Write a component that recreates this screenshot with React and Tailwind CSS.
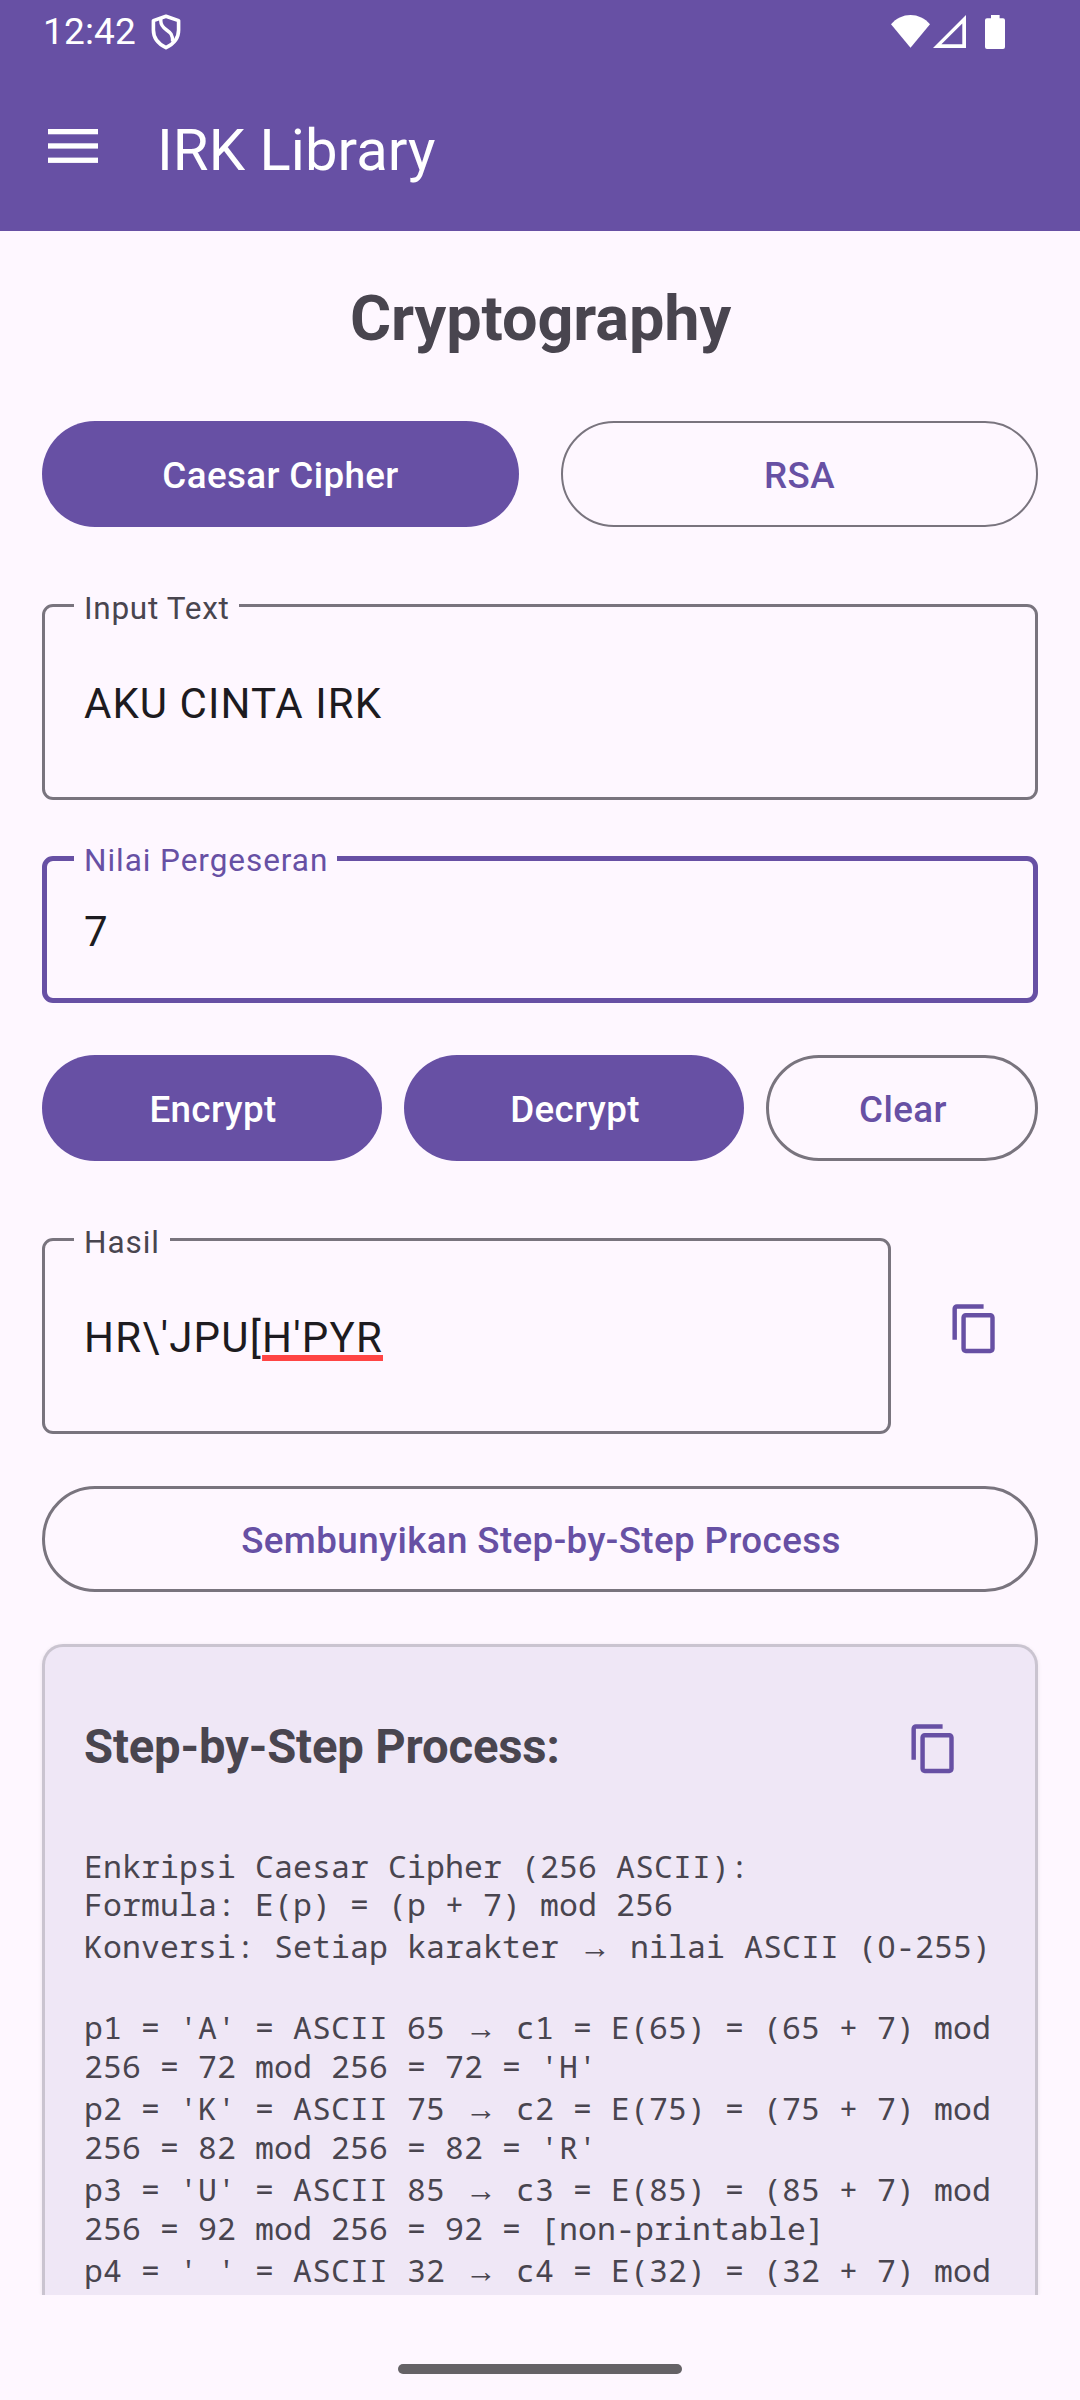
const COPY_PATH =
  "M16 1H4c-1.1 0-2 .9-2 2v14h2V3h12V1zm3 4H8c-1.1 0-2 .9-2 2v14c0 1.1.9 2 2 2h11c1.1 0 2-.9 2-2V7c0-1.1-.9-2-2-2zm0 16H8V7h11v14z";

function CopyIcon({ className }) {
  return (
    <svg viewBox="0 0 24 24" className={`h-[53.4px] w-[53.4px] shrink-0 fill-[#6750A4] ${className}`}>
      <path d={COPY_PATH} />
    </svg>
  );
}

function StatusBar() {
  return (
    <div className="flex h-[63px] items-center pr-[75px] pl-[43px]">
      <span className="w-[93px] text-[37px] leading-[44px] tracking-[0.15px] text-white">12:42</span>
      <svg viewBox="0 0 30 36" className="ml-[14.5px] h-[36px] w-[30px] fill-none stroke-white stroke-[3.6]">
        <path d="M15 2.2 27.6 6.6V16c0 7.6-4.6 13.8-12.6 17.6C7 29.8 2.4 23.6 2.4 16V6.6Z" strokeLinejoin="round" />
        <path d="M9.8 4.5V7c0 4.6 2.4 6.6 5.8 9 4 2.8 6 4.6 6 11.5" strokeWidth="3.4" />
      </svg>
      <svg viewBox="0 0 39 33" className="ml-auto h-[33px] w-[39px] fill-white">
        <path d="M19.5 32.8 0 9.2C5 3.4 12 0 19.5 0S34 3.4 39 9.2Z" />
      </svg>
      <svg viewBox="0 0 33 33" className="ml-[3px] h-[33px] w-[33px] fill-white">
        <path fillRule="evenodd" d="M33 0V33H0ZM29.3 8.4 8.4 29.3H29.3Z" />
      </svg>
      <svg viewBox="0 0 20 34" className="ml-[19px] h-[34px] w-[20px] fill-white">
        <path d="M6 0h8.6v3.3H18a2 2 0 0 1 2 2V32a2 2 0 0 1-2 2H2a2 2 0 0 1-2-2V5.3a2 2 0 0 1 2-2h4Z" />
      </svg>
    </div>
  );
}

function AppBar() {
  return (
    <div className="flex h-[168px] items-center pl-[48px]">
      <svg viewBox="0 0 50 34" className="mb-[2px] h-[34px] w-[50px] fill-white">
        <rect width="50" height="5.3" />
        <rect y="14.3" width="50" height="5.3" />
        <rect y="28.6" width="50" height="5.3" />
      </svg>
      <span className="ml-[59px] pt-[6px] text-[58px] leading-[70px] tracking-[0.06px] text-white">IRK Library</span>
    </div>
  );
}

function FilledButton({ children, className = "" }) {
  return (
    <button
      className={`flex h-[106px] items-center justify-center rounded-full bg-[#6750A4] pt-[3px] text-[36.75px] font-medium tracking-[0.37px] text-white ${className}`}
    >
      {children}
    </button>
  );
}

function OutlinedButton({ children, className = "" }) {
  return (
    <button
      className={`flex h-[106px] items-center justify-center rounded-full border-[#79747E] pt-[3px] text-[36.75px] font-medium tracking-[0.39px] text-[#6750A4] ${className}`}
    >
      {children}
    </button>
  );
}

function Field({ label, labelClass, className, children }) {
  return (
    <div className={`relative flex items-center rounded-[11px] text-[42px] leading-[56px] text-[#1D1B20] ${className}`}>
      <span className={`absolute bg-[#FEF7FF] pl-[10px] text-[31.5px] leading-[40px] whitespace-nowrap ${labelClass}`}>
        {label}
      </span>
      {children}
    </div>
  );
}

function Arrow() {
  return (
    <span className="inline-block w-[33px] pl-[1px] text-center font-['Liberation_Mono',monospace] leading-none">→</span>
  );
}

function Line({ children, className = "h-[39px]" }) {
  return (
    <div className={`flex flex-col justify-end whitespace-pre ${className}`}>
      <div className="leading-[39px]">{children}</div>
    </div>
  );
}

const STEPS = [
  { n: 1, ch: "A", code: 65, sum: 72, out: "'H'" },
  { n: 2, ch: "K", code: 75, sum: 82, out: "'R'" },
  { n: 3, ch: "U", code: 85, sum: 92, out: "[non-printable]" },
  { n: 4, ch: " ", code: 32 },
];

export default function App() {
  return (
    <div className="flex h-[2400px] w-[1080px] flex-col overflow-hidden bg-[#FEF7FF] font-['Roboto',sans-serif]">
      <header className="h-[231px] shrink-0 bg-[#6750A4]">
        <StatusBar />
        <AppBar />
      </header>

      <main className="flex h-[2064px] shrink-0 flex-col overflow-hidden px-[42px]">
        <h1 className="mt-[46px] pl-[1px] text-center text-[63px] leading-[84px] font-bold tracking-[-0.1px] text-[#49454F]">
          Cryptography
        </h1>

        <div className="mt-[60px] grid grid-cols-2 gap-[42px]">
          <FilledButton>Caesar Cipher</FilledButton>
          <OutlinedButton className="border-2">RSA</OutlinedButton>
        </div>

        <Field
          label="Input Text"
          className="mt-[77px] h-[196px] border-[3px] border-[#79747E] pl-[39px]"
          labelClass="top-[-18px] left-[29px] w-[165px] tracking-[0.72px] text-[#49454F]"
        >
          <span className="pt-[3px] tracking-[1.05px]">AKU CINTA IRK</span>
        </Field>

        <Field
          label="Nilai Pergeseran"
          className="mt-[56px] h-[147px] border-[5px] border-[#6750A4] pl-[37px]"
          labelClass="top-[-20px] left-[27px] w-[263px] tracking-[0.95px] text-[#6750A4]"
        >
          <span className="pt-[4px]">7</span>
        </Field>

        <div className="mt-[52px] flex gap-[22px]">
          <FilledButton className="w-[340px] pl-[2px]">Encrypt</FilledButton>
          <FilledButton className="w-[340px] pl-[2px]">Decrypt</FilledButton>
          <OutlinedButton className="w-[272px] border-[3px] pl-[2px]">Clear</OutlinedButton>
        </div>

        <div className="mt-[77px] flex">
          <Field
            label="Hasil"
            className="h-[196px] w-[849px] border-[3px] border-[#79747E] pl-[39px]"
            labelClass="top-[-18px] left-[29px] w-[96px] tracking-[0.95px] text-[#49454F]"
          >
            <span className="pt-[3px] tracking-[1.2px]">
              HR\'JPU[
              <span className="underline decoration-[#FF4444] decoration-[5.5px] underline-offset-[3px] [text-decoration-skip-ink:none]">
                H'PYR
              </span>
            </span>
          </Field>
          <CopyIcon className="mt-[63.8px] ml-[56.9px]" />
        </div>

        <OutlinedButton className="mt-[52px] w-full shrink-0 border-[3px] pl-[2px]">
          Sembunyikan Step-by-Step Process
        </OutlinedButton>

        <section className="mt-[52px] flex-1 rounded-t-[21px] border-[3px] border-b-0 border-[#CAC4D0] bg-[#EFE7F6] pl-[39px] shadow-[0_1px_4px_rgba(0,0,0,0.08)]">
          <div className="mt-[70px] flex h-[60px]">
            <h2 className="w-[823px] text-[47.25px] leading-[60px] font-bold tracking-[-0.17px] text-[#49454F]">
              Step-by-Step Process:
            </h2>
            <CopyIcon className="mt-[4.8px]" />
          </div>
          <div className="mt-[69px] font-['Noto_Sans_Mono','DejaVu_Sans_Mono',monospace] text-[31.5px] tracking-[0.1px] text-[#49454F]">
            <Line>Enkripsi Caesar Cipher (256 ASCII):</Line>
            <Line className="h-[38px]">Formula: E(p) = (p + 7) mod 256</Line>
            <Line className="h-[42px]">
              Konversi: Setiap karakter <Arrow /> nilai ASCII (
              <span className="inline-block w-[19px] text-center font-['Noto_Sans',sans-serif] leading-none">0</span>-255)
            </Line>
            <div className="h-[39px]" />
            {STEPS.map((s) => (
              <div key={s.n}>
                <Line className="h-[42px]">
                  {`p${s.n} = '${s.ch}' = ASCII ${s.code} `}
                  <Arrow />
                  {` c${s.n} = E(${s.code}) = (${s.code} + 7) mod`}
                </Line>
                {s.sum && <Line>{`256 = ${s.sum} mod 256 = ${s.sum} = ${s.out}`}</Line>}
              </div>
            ))}
          </div>
        </section>
      </main>

      <footer className="flex flex-1 justify-center pt-[69px]">
        <div className="h-[10px] w-[284px] rounded-[5px] bg-[#656266]" />
      </footer>
    </div>
  );
}
